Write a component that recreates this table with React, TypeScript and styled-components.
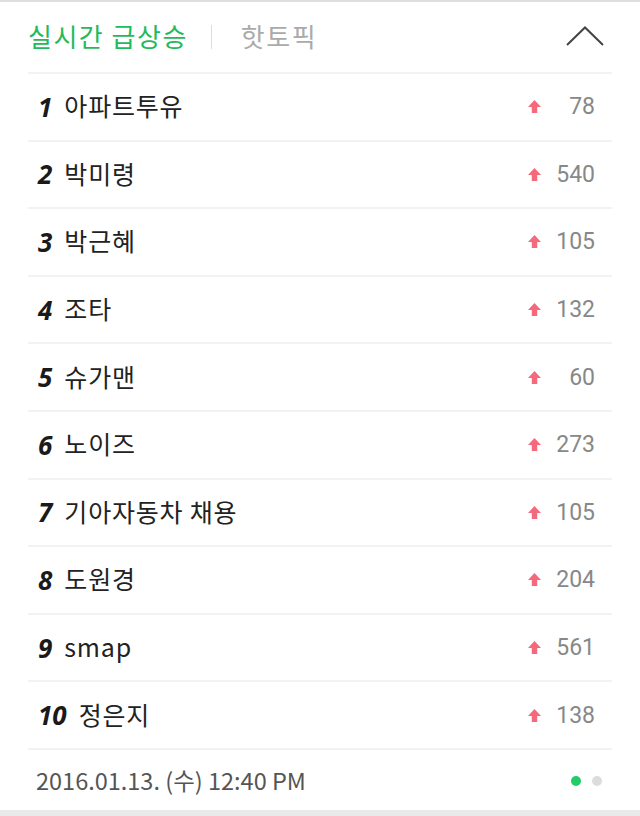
import React from "react";
import styled, { createGlobalStyle } from "styled-components";

const GlobalStyle = createGlobalStyle`
    html, body {
        margin: 0;
        padding: 0;
        background: #fff;
    }
    body {
        font-family: "Noto Sans CJK KR", "Noto Sans", sans-serif;
    }
`;

interface IKeyword {
    rank: number;
    name: string;
    count: number;
}

const keywords: IKeyword[] = [
    { rank: 1, name: "아파트투유", count: 78 },
    { rank: 2, name: "박미령", count: 540 },
    { rank: 3, name: "박근혜", count: 105 },
    { rank: 4, name: "조타", count: 132 },
    { rank: 5, name: "슈가맨", count: 60 },
    { rank: 6, name: "노이즈", count: 273 },
    { rank: 7, name: "기아자동차 채용", count: 105 },
    { rank: 8, name: "도원경", count: 204 },
    { rank: 9, name: "smap", count: 561 },
    { rank: 10, name: "정은지", count: 138 },
];

const UpArrow = () => (
    <svg width="13" height="13" viewBox="0 0 12 12">
        <path d="M6 0 L12 6.5 L8.5 6.5 L8.5 12 L3.5 12 L3.5 6.5 L0 6.5 Z" fill="#f5697c" />
    </svg>
);

const Chevron = () => (
    <svg width="38" height="20" viewBox="0 0 38 20">
        <path d="M1 19 L19 1.5 L37 19" fill="none" stroke="#444" strokeWidth="2" />
    </svg>
);

export default function App() {
    return (
        <Wrapper>
            <GlobalStyle />
            <Header>
                <Tab active>실시간 급상승</Tab>
                <Divider />
                <Tab>핫토픽</Tab>
                <CollapseBtn>
                    <Chevron />
                </CollapseBtn>
            </Header>
            <List>
                {keywords.map((item) => (
                    <Row key={item.rank}>
                        <Rank>{item.rank}</Rank>
                        <Name>{item.name}</Name>
                        <Change>
                            <UpArrow />
                            <Count>{item.count}</Count>
                        </Change>
                    </Row>
                ))}
            </List>
            <Footer>
                <DateText>2016.01.13. (수) 12:40 PM</DateText>
                <Dots>
                    <Dot on />
                    <Dot />
                </Dots>
            </Footer>
        </Wrapper>
    );
}

const Wrapper = styled.div`
    width: 640px;
    height: 816px;
    box-sizing: border-box;
    border-top: 2px solid #dedede;
    border-bottom: 6px solid #e9e9e9;
    background: #fff;
`;

const Header = styled.div`
    display: flex;
    align-items: center;
    height: 70px;
    margin: 0 28px;
    border-bottom: 2px solid #f2f2f2;
`;

const Tab = styled.div<{ active?: boolean }>`
    font-size: 26px;
    color: ${(p) => (p.active ? "#1fba5c" : "#aaa")};
    letter-spacing: 1.5px;
    line-height: 1;
    padding-bottom: 2px;
`;

const Divider = styled.span`
    width: 1px;
    height: 24px;
    background: #ddd;
    margin: 0 29px 0 23px;
`;

const CollapseBtn = styled.div`
    margin-left: auto;
    margin-right: 8px;
    display: flex;
    align-items: center;
    padding-bottom: 2px;
`;

const List = styled.ul`
    list-style: none;
    margin: 0 28px;
    padding: 0;
`;

const Row = styled.li`
    display: flex;
    align-items: center;
    height: 65.6px;
    padding: 0 17px 0 10px;
    border-bottom: 2px solid #f2f2f2;
`;

const Rank = styled.span`
    font-family: "Open Sans", "Liberation Sans", sans-serif;
    font-style: italic;
    font-weight: 700;
    font-size: 26px;
    color: #1a1a1a;
    margin-right: 12px;
    line-height: 1;
`;

const Name = styled.span`
    font-size: 25px;
    color: #222;
    letter-spacing: 0.8px;
    line-height: 1;
    padding-bottom: 2px;
`;

const Change = styled.div`
    margin-left: auto;
    display: flex;
    align-items: center;
    gap: 15px;
`;

const Count = styled.span`
    font-family: Roboto, "Noto Sans", sans-serif;
    font-size: 23px;
    color: #888;
    min-width: 39px;
    text-align: right;
`;

const Footer = styled.div`
    display: flex;
    align-items: center;
    height: 62px;
    padding: 0 38px 0 36px;
`;

const DateText = styled.span`
    font-size: 23.5px;
    color: #555;
    line-height: 1;
`;

const Dots = styled.div`
    margin-left: auto;
    display: flex;
    gap: 11px;
`;

const Dot = styled.span<{ on?: boolean }>`
    width: 10px;
    height: 10px;
    border-radius: 50%;
    background: ${(p) => (p.on ? "#22cc66" : "#dcdcdc")};
`;
